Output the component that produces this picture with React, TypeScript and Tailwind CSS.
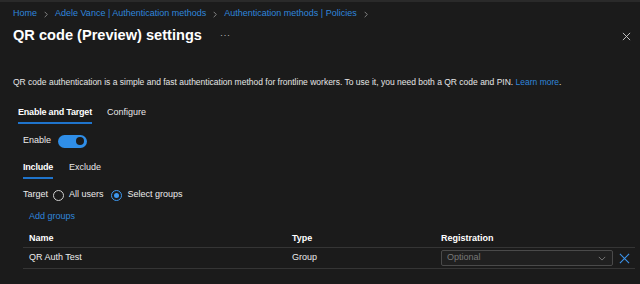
import { FC } from "react";

const Chevron: FC = () => (
  <svg viewBox="0 0 6 10" className="w-[4px] h-[7px] text-[#9a9a9a]" fill="none" stroke="currentColor" strokeWidth={1.2}>
    <path d="M1 1l4 4-4 4" />
  </svg>
);

const Tab: FC<{ label: string; active?: boolean }> = ({ label, active }) => (
  <div className="flex flex-col">
    <span className={`leading-[14px] ${active ? "font-bold text-white tracking-[-0.2px]" : "text-[#e8e8e8]"}`}>{label}</span>
    <div className={`mt-[3px] h-[2px] ${active ? "bg-[#1f74cc]" : "bg-transparent"}`} />
  </div>
);

const Radio: FC<{ checked?: boolean }> = ({ checked }) => (
  <span
    className={`w-[11px] h-[11px] rounded-full border flex items-center justify-center ${
      checked ? "border-[#3d97ee]" : "border-[#d0d0d0]"
    }`}
  >
    {checked && <span className="w-[5px] h-[5px] rounded-full bg-[#3d97ee]" />}
  </span>
);

export default function App() {
  return (
    <div className="w-[640px] h-[284px] bg-[#1b1b1b] text-[#ececec] text-[9px] overflow-hidden" style={{ fontFamily: '"Liberation Sans", Arial, sans-serif' }}>
      {/* top strip */}
      <div className="h-[2px] bg-[#2a2a2a]" />

      <div className="px-[13px]">
        {/* Breadcrumb */}
        <div className="mt-[5px] h-[14px] flex items-center gap-[7px] text-[#2f86dc]">
          <span>Home</span>
          <Chevron />
          <span>Adele Vance | Authentication methods</span>
          <Chevron />
          <span>Authentication methods | Policies</span>
          <Chevron />
        </div>

        {/* Title */}
        <div className="mt-[3px] h-[24px] flex items-center">
          <h1 className="text-[14.6px] font-bold text-white">QR code (Preview) settings</h1>
          <span className="ml-[18px] text-[#bbbbbb] text-[9px] tracking-[0.5px]">···</span>
          <svg viewBox="0 0 10 10" className="ml-auto mr-[-4px] w-[9px] h-[9px] text-[#cfcfcf]" fill="none" stroke="currentColor" strokeWidth={1}>
            <path d="M1 1l8 8M9 1l-8 8" />
          </svg>
        </div>

        {/* Description */}
        <p className="mt-[27px] leading-[14px] text-[8.5px] text-[#e6e6e6]">
          QR code authentication is a simple and fast authentication method for frontline workers. To use it, you need both a QR code and PIN.{" "}
          <span className="text-[#2f86dc]">Learn more</span>.
        </p>

        {/* Main tabs */}
        <div className="mt-[16px] ml-[5px] flex gap-[15px]">
          <Tab label="Enable and Target" active />
          <Tab label="Configure" />
        </div>

        <div className="ml-[10px]">
          {/* Enable */}
          <div className="mt-[10px] h-[14px] flex items-center gap-[7px]">
            <span>Enable</span>
            <span className="w-[29px] h-[13px] rounded-full bg-[#2f8ee8] flex items-center justify-end pr-[3px]">
              <span className="w-[8px] h-[8px] rounded-full bg-[#1b1b1b]" />
            </span>
          </div>

          {/* Include / Exclude */}
          <div className="mt-[12px] flex gap-[16px]">
            <Tab label="Include" active />
            <Tab label="Exclude" />
          </div>

          {/* Target */}
          <div className="mt-[9px] h-[14px] flex items-center">
            <span>Target</span>
            <span className="ml-[5px]"><Radio /></span>
            <span className="ml-[5px]">All users</span>
            <span className="ml-[7px]"><Radio checked /></span>
            <span className="ml-[6px]">Select groups</span>
          </div>

          {/* Add groups */}
          <div className="mt-[8px] ml-[6px] h-[14px] flex items-center text-[#2f86dc]">Add groups</div>

          {/* Table */}
          <div className="mt-[7px] w-[612px]">
            <div className="h-[17px] flex items-center font-bold text-white border-b border-[#353535]">
              <span className="w-[269px] pl-[6px]">Name</span>
              <span className="w-[149px]">Type</span>
              <span>Registration</span>
            </div>
            <div className="h-[21px] flex items-center border-b border-[#353535]">
              <span className="w-[269px] pl-[6px]">QR Auth Test</span>
              <span className="w-[149px]">Group</span>
              <div className="w-[172px] h-[16px] border border-[#4a4a4a] bg-[#202020] rounded-[2px] flex items-center px-[5px] text-[#787878]">
                <span>Optional</span>
                <svg viewBox="0 0 10 6" className="ml-auto mr-[1px] w-[8px] h-[5px] text-[#8a8a8a]" fill="none" stroke="currentColor" strokeWidth={1}>
                  <path d="M1 1l4 4 4-4" />
                </svg>
              </div>
              <svg viewBox="0 0 12 12" className="ml-[6px] w-[11px] h-[11px] text-[#3b93ec]" fill="none" stroke="currentColor" strokeWidth={1.2}>
                <path d="M1 1l10 10M11 1L1 11" />
              </svg>
            </div>
          </div>
        </div>
      </div>
    </div>
  );
}
